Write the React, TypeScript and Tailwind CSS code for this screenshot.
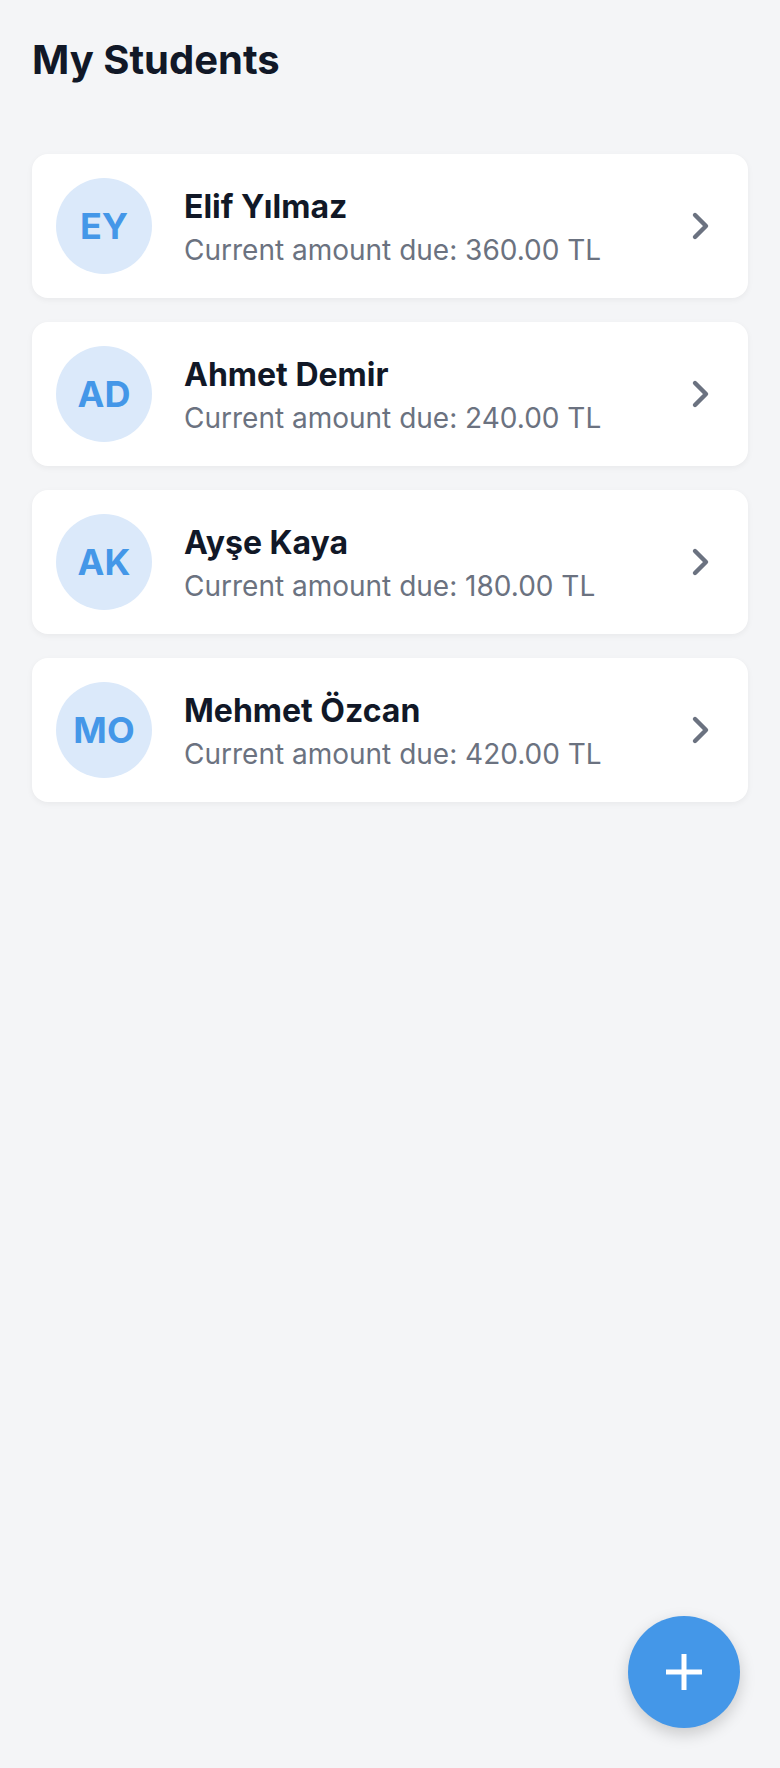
import React from "react";

type Student = {
  initials: string;
  name: string;
  due: string;
};

const students: Student[] = [
  { initials: "EY", name: "Elif Yılmaz", due: "360.00" },
  { initials: "AD", name: "Ahmet Demir", due: "240.00" },
  { initials: "AK", name: "Ayşe Kaya", due: "180.00" },
  { initials: "MO", name: "Mehmet Özcan", due: "420.00" },
];

function ChevronRight() {
  return (
    <svg
      width="48"
      height="48"
      viewBox="0 0 24 24"
      fill="none"
      stroke="#6b7280"
      strokeWidth="2.2"
      strokeLinecap="round"
      strokeLinejoin="round"
    >
      <path d="m9.5 17.5 5.5-5.5-5.5-5.5" />
    </svg>
  );
}

function StudentCard({ s }: { s: Student }) {
  return (
    <div className="flex items-center bg-white rounded-[16px] p-[24px] shadow-[0_2px_6px_rgba(0,0,0,0.05)]">
      <div className="w-[96px] h-[96px] rounded-full bg-[#dbe9fa] flex items-center justify-center shrink-0">
        <span className="text-[36px] font-bold text-[#4497e8] leading-none">{s.initials}</span>
      </div>
      <div className="flex-1 ml-[32px] pt-[3px] flex flex-col">
        <span className="text-[32px] leading-[40px] font-bold text-[#111827]">{s.name}</span>
        <span className="text-[28px] leading-[36px] mt-[5px] text-[#6b7280]">
          Current amount due: {s.due} TL
        </span>
      </div>
      <ChevronRight />
    </div>
  );
}

export default function App() {
  return (
    <div
      className="relative min-h-[1768px] bg-[#f4f5f7] px-[32px] pt-[36px]"
      style={{ fontFamily: "Inter, 'Noto Sans', sans-serif" }}
    >
      <h1 className="text-[40px] leading-[48px] font-bold text-[#111827]">My Students</h1>

      <div className="mt-[70px] flex flex-col gap-[24px]">
        {students.map((s) => (
          <StudentCard key={s.initials} s={s} />
        ))}
      </div>

      <button className="absolute right-[40px] bottom-[40px] w-[112px] h-[112px] rounded-full bg-[#4497e8] flex items-center justify-center shadow-[0_6px_16px_rgba(0,0,0,0.18)]">
        <svg width="36" height="36" viewBox="0 0 36 36">
          <path d="M0 18h36M18 0v36" stroke="white" strokeWidth="5" />
        </svg>
      </button>
    </div>
  );
}
